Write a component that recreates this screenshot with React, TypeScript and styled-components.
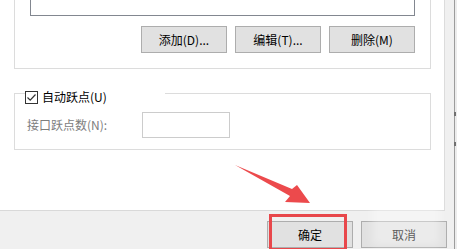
import React from "react";
import styled, { createGlobalStyle } from "styled-components";

const Global = createGlobalStyle`
  html, body { margin: 0; padding: 0; background: #f0f0f0; overflow: hidden; }
  * { box-sizing: border-box; }
  body { font-family: "Noto Sans CJK SC", "Noto Sans", sans-serif; font-size: 12px; color: #000; }
`;

const Screen = styled.div`
  position: relative;
  width: 457px;
  height: 249px;
  display: flex;
  overflow: hidden;
`;

const Dialog = styled.div`
  width: 454px;
  height: 249px;
  display: flex;
  flex-direction: column;
  background: #f0f0f0;
`;

const FrameEdge = styled.div`
  width: 3px;
  height: 249px;
  border-left: 1px solid #9c9c9c;
  background: #ececec;
`;

const Panel = styled.div`
  width: 445px;
  height: 211px;
  flex: none;
  background: #fff;
  border-right: 1px solid #dcdcdc;
  border-bottom: 1px solid #d9d9d9;
  padding: 0 0 0 14px;
  display: flex;
  flex-direction: column;
  overflow: hidden;
`;

const GroupBox = styled.div<{ $top: number }>`
  width: 417px;
  margin-top: ${(p) => p.$top}px;
  border: 1px solid #dcdcdc;
  display: flex;
  flex-direction: column;
`;

const TopGroupInner = styled.div`
  padding: 10px 15px 15px 15px;
  display: flex;
  flex-direction: column;
  gap: 10px;
`;

const ListBox = styled.div`
  height: 55px;
  border: 1px solid #828790;
  background: #fff;
`;

const ButtonRow = styled.div`
  display: flex;
  justify-content: flex-end;
  gap: 8px;
`;

const WinButton = styled.button`
  width: 86px;
  height: 27px;
  padding: 0;
  border: 1px solid #adadad;
  background: #e1e1e1;
  font-family: "Noto Sans CJK SC", "Noto Sans", sans-serif;
  font-size: 12px;
  color: #000;
  display: flex;
  align-items: center;
  justify-content: center;
  line-height: 14px;
`;

const Legend = styled.div`
  margin: -4px 0 0 10px;
  width: 140px;
  height: 14px;
  background: #fff;
  display: flex;
  align-items: center;
  gap: 4px;
`;

const CheckBox = styled.span`
  width: 13px;
  height: 13px;
  flex: none;
  border: 1px solid #333;
  background: #fff;
  display: flex;
  align-items: center;
  justify-content: center;
`;

const LegendText = styled.span`
  line-height: 14px;
  color: #000;
  white-space: nowrap;
`;

const FieldRow = styled.div`
  margin-top: 8px;
  padding: 0 0 11px 12px;
  display: flex;
  align-items: center;
`;

const FieldLabel = styled.span`
  width: 115px;
  color: #7d7d7d;
  white-space: nowrap;
  line-height: 14px;
`;

const TextInput = styled.div`
  width: 88px;
  height: 26px;
  border: 1px solid #cccccc;
  background: #fff;
`;

const Footer = styled.div`
  flex: 1;
  display: flex;
  justify-content: flex-end;
  gap: 8px;
  padding: 10px 7px 0 0;
`;

const Highlight = styled.div`
  position: absolute;
  left: 269px;
  top: 214px;
  width: 78px;
  height: 36px;
  border: 3px solid #e8474b;
  border-bottom-width: 2px;
`;

const ArrowSvg = styled.svg`
  position: absolute;
  left: 230px;
  top: 160px;
  overflow: visible;
`;

const Watermark = styled.div`
  position: absolute;
  left: 372px;
  top: 176px;
  width: 68px;
  height: 70px;
  background: rgba(255, 255, 255, 0.35);
  filter: blur(4px);
`;

const EdgeMark = styled.div<{ $top: number }>`
  position: absolute;
  left: 454px;
  top: ${(p) => p.$top}px;
  width: 3px;
  height: 4px;
  border-left: 2px solid #707070;
`;

export default function App() {
  return (
    <>
      <Global />
      <Screen>
        <Dialog>
          <Panel>
            <GroupBox $top={-50}>
              <TopGroupInner>
                <ListBox />
                <ButtonRow>
                  <WinButton>添加(D)...</WinButton>
                  <WinButton>编辑(T)...</WinButton>
                  <WinButton>删除(M)</WinButton>
                </ButtonRow>
              </TopGroupInner>
            </GroupBox>
            <GroupBox $top={24}>
              <Legend>
                <CheckBox>
                  <svg width="11" height="11" viewBox="0 0 11 11">
                    <path d="M1.5 5.5 L4.2 8.2 L9.5 2.5" fill="none" stroke="#333" strokeWidth="1.2" />
                  </svg>
                </CheckBox>
                <LegendText>自动跃点(U)</LegendText>
              </Legend>
              <FieldRow>
                <FieldLabel>接口跃点数(N):</FieldLabel>
                <TextInput />
              </FieldRow>
            </GroupBox>
          </Panel>
          <Footer>
            <WinButton>确定</WinButton>
            <WinButton>取消</WinButton>
          </Footer>
        </Dialog>
        <FrameEdge />
        <EdgeMark $top={112} />
        <EdgeMark $top={142} />
        <Watermark />
        <Highlight />
        <ArrowSvg width="90" height="50" viewBox="0 0 90 50">
          <polygon
            points="5,5 62,29 67,25 80,43 55,42 60,36"
            fill="#ec4a4c"
          />
        </ArrowSvg>
      </Screen>
    </>
  );
}
